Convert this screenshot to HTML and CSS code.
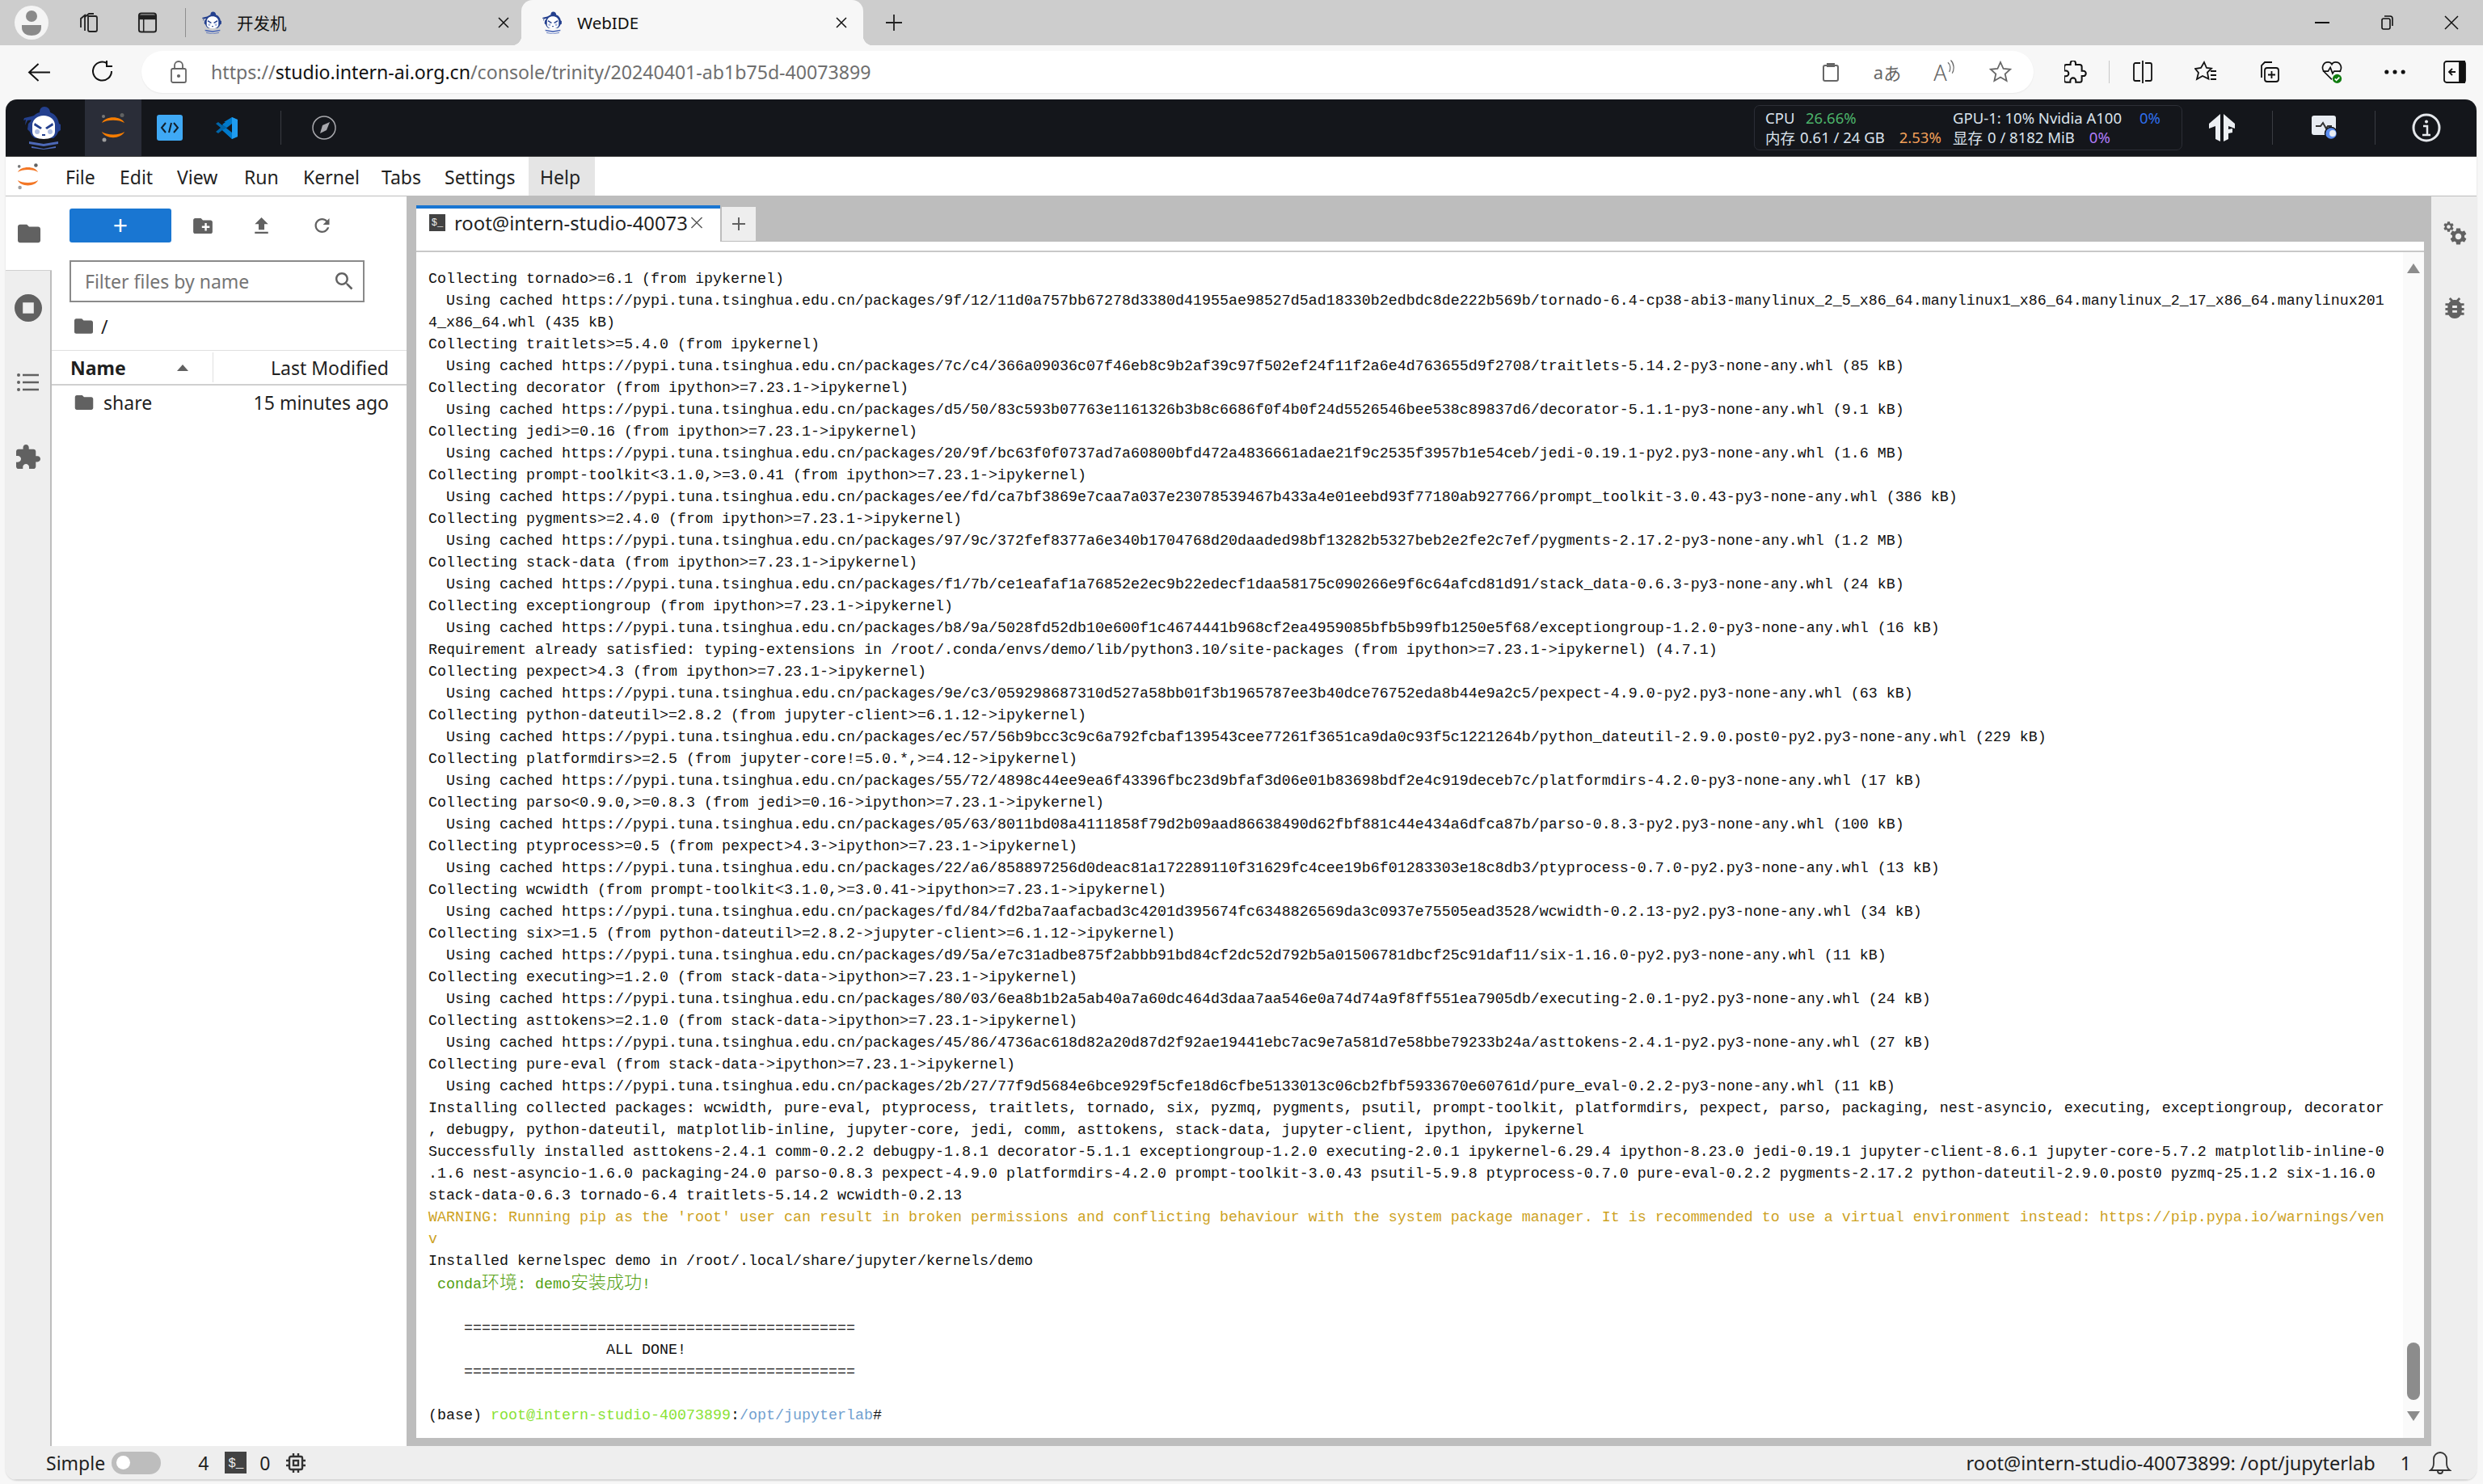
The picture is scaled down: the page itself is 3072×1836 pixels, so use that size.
FILE: index.html
```html
<!DOCTYPE html>
<html lang="en">
<head>
<meta charset="utf-8">
<title>WebIDE</title>
<link rel="stylesheet" href="styles.css">
</head>
<body>
<svg class="defs" width="0" height="0" aria-hidden="true">
  <defs>
    <symbol id="mascot" viewBox="0 0 50 54">
      <path fill="#24408e" d="M20 8c0-4 2-7 6-7s7 3 7 7c6 2 10 7 11 14l2 1v7l-3 2c-1 3-3 6-6 8H14c-3-2-5-5-6-8l-3-3 1-7 3-3C10 14 14 10 20 8z"/>
      <path fill="#24408e" d="M1 15l13-3-2 5-7 1-3 6 1-7-3 1z"/>
      <path fill="#fff" d="M11 24c0-7 6-12 14-12s14 5 14 12v8c0 6-6 9-14 9s-14-3-14-9z"/>
      <path fill="#24408e" d="M14 21l9 6-2 2-8-5zM36 21l-9 6 2 2 8-5z"/>
      <circle cx="17" cy="32" r="3" fill="#aebde2"/><circle cx="33" cy="32" r="3" fill="#aebde2"/>
      <path fill="#24408e" d="M23 35h4v2h-4z"/>
      <path fill="#4d69b8" d="M7 44l18 3 18-3v3l-18 3-18-3zM10 50l15 3 15-3v2l-15 2-15-2z"/>
    </symbol>
    <symbol id="jupyter" viewBox="0 0 30 36">
      <path fill="currentColor" d="M1 12C5 3 25 3 29 12 23 7.500 7 7.500 1 12zM1 23c4 9.500 24 9.500 28 0-6 4.500-22 4.500-28 0z"/>
      <circle cx="3" cy="4" r="2" fill="#767677"/><circle cx="26" cy="2.500" r="2.500" fill="#616262"/><circle cx="4" cy="33" r="2.500" fill="#9e9e9e"/>
    </symbol>
    <symbol id="folder" viewBox="2 4 20 16"><path d="M10 4H4c-1.100 0-1.990.9-1.990 2L2 18c0 1.100.9 2 2 2h16c1.100 0 2-.9 2-2V8c0-1.100-.9-2-2-2h-8l-2-2z"/></symbol>
    <symbol id="gear" viewBox="2 2 20 20"><path d="M19.140 12.940c.04-.3.06-.61.06-.94 0-.32-.02-.64-.07-.94l2.030-1.580c.18-.14.23-.41.12-.61l-1.920-3.320c-.12-.22-.37-.29-.59-.22l-2.390.96c-.5-.38-1.030-.7-1.620-.94l-.36-2.540c-.04-.24-.24-.41-.48-.41h-3.840c-.24 0-.43.17-.47.41l-.36 2.540c-.59.24-1.130.57-1.620.94l-2.390-.96c-.22-.08-.47 0-.59.22L2.740 8.870c-.12.21-.08.47.12.61l2.030 1.580c-.05.3-.09.63-.09.94s.02.64.07.94l-2.030 1.580c-.18.14-.23.41-.12.61l1.920 3.320c.12.22.37.29.59.22l2.390-.96c.5.38 1.030.7 1.620.94l.36 2.540c.05.24.24.41.48.41h3.840c.24 0 .44-.17.47-.41l.36-2.540c.59-.24 1.130-.56 1.620-.94l2.390.96c.22.08.47 0 .59-.22l1.920-3.320c.12-.22.07-.47-.12-.61l-2.010-1.580zM12 15.600c-1.980 0-3.600-1.620-3.600-3.600s1.620-3.600 3.600-3.600 3.600 1.620 3.600 3.600-1.620 3.600-3.600 3.600z"/></symbol>
  </defs>
</svg>

<div class="browser">
  <header class="tabstrip">
    <div class="avatar"><svg viewBox="0 0 42 42" class="avatar-icon"><circle cx="21" cy="13" r="7" fill="#8a8a8a"/><path d="M9 24h24v3c0 7-6 10-12 10S9 34 9 27z" fill="#8a8a8a"/></svg></div>
    <svg class="strip-icon collections" viewBox="0 0 28 28" fill="none" stroke="#222" stroke-width="1.800"><path d="M14 6h9a2 2 0 0 1 2 2v15a2 2 0 0 1-2 2h-7a2 2 0 0 1-2-2z"/><path d="M10 24V7l5-4h6M5 20V9l6-5"/></svg>
    <svg class="strip-icon verticals" viewBox="0 0 26 28" fill="none" stroke="#222" stroke-width="2"><rect x="2" y="2" width="22" height="24" rx="3"/><path d="M2 7h22" stroke-width="6"/><path d="M8 7v19" stroke-width="1.600"/></svg>
    <span class="strip-sep"></span>
    <div class="btab">
      <svg class="favicon"><use href="#mascot"/></svg>
      <span class="btab-title cjk">开发机</span>
      <svg class="btab-close" viewBox="0 0 16 16" fill="none" stroke="#111" stroke-width="1.500"><path d="M2 2l12 12M14 2L2 14"/></svg>
    </div>
    <div class="btab btab-active">
      <svg class="favicon"><use href="#mascot"/></svg>
      <span class="btab-title">WebIDE</span>
      <svg class="btab-close" viewBox="0 0 16 16" fill="none" stroke="#111" stroke-width="1.500"><path d="M2 2l12 12M14 2L2 14"/></svg>
    </div>
    <svg class="newtab" viewBox="0 0 22 22" fill="none" stroke="#222" stroke-width="1.800"><path d="M11 1v20M1 11h20"/></svg>
    <div class="winctl">
      <svg viewBox="0 0 18 18" fill="none" stroke="#111" stroke-width="2"><path d="M0 9h18"/></svg>
      <svg viewBox="0 0 18 18" fill="none" stroke="#111" stroke-width="1.600"><rect x="3" y="4" width="10" height="13" rx="2"/><path d="M6 1h7a3 3 0 0 1 3 3v9"/></svg>
      <svg viewBox="0 0 18 18" fill="none" stroke="#111" stroke-width="1.500"><path d="M1 1l16 16M17 1L1 17"/></svg>
    </div>
  </header>

  <nav class="toolbar">
    <svg class="nav-icon back" viewBox="0 0 30 26" fill="none" stroke="#111" stroke-width="2"><path d="M14 2L2 13l12 11M2 13h27"/></svg>
    <svg class="nav-icon reload" viewBox="0 0 28 28" fill="none" stroke="#111" stroke-width="2"><path d="M20 4a11.500 11.500 0 1 0 6 10"/><path d="M20 1v7h7"/></svg>
    <div class="pill">
      <svg class="lock" viewBox="0 0 22 30" fill="none" stroke="#666" stroke-width="1.800"><rect x="2" y="11" width="18" height="17" rx="2"/><path d="M6 11V7a5 5 0 0 1 10 0v4"/><circle cx="11" cy="20" r="1.200" fill="#666"/></svg>
      <div class="url"><span class="url-dim">https://</span><span>studio.intern-ai.org.cn</span><span class="url-dim">/console/trinity/20240401-ab1b75d-40073899</span></div>
      <div class="pill-tools">
        <span class="pill-slot"><svg class="pt-clip" viewBox="0 0 22 24" fill="none" stroke="#666" stroke-width="2"><rect x="2" y="4" width="18" height="19" rx="2"/><path d="M7 5V2h8v3z" fill="#666"/></svg></span>
        <span class="pill-slot translate">a<span class="cjk">あ</span></span>
        <span class="pill-slot readaloud">A<svg viewBox="0 0 10 20" fill="none" stroke="#666" stroke-width="1.300"><path d="M1 3c4 3 4 9 2 13M5 0c5 5 5 13 2 18"/></svg></span>
        <span class="pill-slot"><svg class="pt-star" viewBox="0 0 28 28" fill="none" stroke="#666" stroke-width="1.800"><path d="M14 2l3.600 8 8.400.8-6.300 5.700 1.900 8.500L14 20.500 6.400 25l1.900-8.500L2 10.800l8.400-.8z"/></svg></span>
      </div>
    </div>
    <div class="tools">
      <span class="tool"><svg viewBox="2 1 22 22" fill="none" stroke="#111" stroke-width="1.600"><path d="M20.500 11H19V7c0-1.100-.9-2-2-2h-4V3.500C13 2.120 11.880 1 10.500 1S8 2.120 8 3.500V5H4c-1.100 0-1.990.9-1.990 2v3.800H3.500c1.490 0 2.700 1.210 2.700 2.700s-1.210 2.700-2.700 2.700H2V20c0 1.100.9 2 2 2h3.800v-1.500c0-1.490 1.210-2.700 2.700-2.700 1.490 0 2.700 1.210 2.700 2.700V22H17c1.100 0 2-.9 2-2v-4h1.500c1.380 0 2.500-1.120 2.500-2.500S21.880 11 20.500 11z"/></svg></span>
      <span class="tool-sep"></span>
      <span class="tool"><svg viewBox="0 0 26 28" fill="none" stroke="#111" stroke-width="1.800"><path d="M13 0v28M10 3H4a2 2 0 0 0-2 2v18a2 2 0 0 0 2 2h6M16 3h6a2 2 0 0 1 2 2v18a2 2 0 0 1-2 2h-6"/></svg></span>
      <span class="tool"><svg viewBox="0 0 28 28" fill="none" stroke="#111" stroke-width="1.800"><path d="M12 2l3 7 6 .6-5 5 1.500 8L10 19l-7 4 2-8-4-5 7-1zM20 13h7M20 18h7M20 23h7"/></svg></span>
      <span class="tool"><svg viewBox="0 0 28 28" fill="none" stroke="#111" stroke-width="1.800"><path d="M5 21V6l4-4h9"/><rect x="9" y="9" width="17" height="17" rx="3"/><path d="M17.500 13v9M13 17.500h9"/></svg></span>
      <span class="tool"><svg viewBox="0 0 28 30" fill="none" stroke="#111" stroke-width="1.800"><path d="M14 25L4 15C-1 9 3 2 9 2c2 0 4 1 5 3 1-2 3-3 5-3 6 0 10 7 5 13"/><path d="M2 14h7l3-5 3 8 2-3h9"/><circle cx="21" cy="24" r="6" fill="#107c10" stroke="none"/><path d="M18 24l2 2 4-4" stroke="#fff"/></svg></span>
      <span class="tool"><svg viewBox="0 0 22 6" fill="#111"><circle cx="3" cy="3" r="2"/><circle cx="11" cy="3" r="2"/><circle cx="19" cy="3" r="2"/></svg></span>
      <span class="tool tool-last"><svg viewBox="0 0 28 28" fill="none" stroke="#111" stroke-width="1.800"><rect x="1" y="1" width="26" height="26" rx="3"/><path d="M20 1h6v26h-6z" fill="#111"/><path d="M15 14H7M11 10l-4 4 4 4"/></svg></span>
    </div>
  </nav>
</div>

<main class="app">
  <div class="topbar">
    <svg class="mascot"><use href="#mascot"/></svg>
    <div class="topitem topitem-active"><svg class="jup-top"><use href="#jupyter"/></svg></div>
    <div class="topitem"><svg class="code-app" viewBox="0 0 32 32"><rect width="32" height="32" rx="3" fill="#3fa9f5"/><path d="M11 10l-5 6 5 6M21 10l5 6-5 6M18 10l-3 12" fill="none" stroke="#12202c" stroke-width="2"/></svg></div>
    <div class="topitem"><svg class="vscode" viewBox="0 0 27 27"><path fill="#0065a9" d="M20 0l7 3v21l-7 3-12-11-5 4-3-2 6-5-6-5 3-2 5 4z"/><path fill="#007acc" d="M20 0v27l-12-11 6-3-6-4 4-3-2 0z"/><path fill="#1f9cf0" d="M20 0l7 3v21l-7 3z"/><path fill="#14161b" d="M20 8v11l-7-5.500z"/></svg></div>
    <span class="top-sep"></span>
    <svg class="compass" viewBox="0 0 30 30"><circle cx="15" cy="15" r="14" fill="none" stroke="#a8a8ad" stroke-width="1.500"/><path d="M22 8l-4 10-8 4 3-10z" fill="#a8a8ad"/></svg>
    <div class="top-spacer"></div>
    <div class="stats">
      <div class="stats-col stats-left">
        <div class="stat-row"><span class="stat-label">CPU</span><span class="c-green">26.66%</span></div>
        <div class="stat-row"><span class="cjk-stat">内存</span><span class="mem">0.61 / 24 GB</span><span class="c-orange">2.53%</span></div>
      </div>
      <div class="stats-col">
        <div class="stat-row"><span class="gpu">GPU-1: 10% Nvidia A100</span><span class="c-blue">0%</span></div>
        <div class="stat-row"><span class="cjk-stat">显存</span><span class="mem">0 / 8182 MiB</span><span class="c-purple">0%</span></div>
      </div>
    </div>
    <div class="top-right">
      <svg class="tf" viewBox="0 0 32 34" fill="#eceff3"><path d="M14 0v34l-6-3V15L0 18v-6zM18 0l14 12v6l-8-3v4l5-1v5l-5 1v7l-6 3z"/></svg>
      <span class="top-sep"></span>
      <svg class="monitor" viewBox="0 0 32 30"><rect width="30" height="24" rx="3" fill="#e8ecf2"/><path d="M5 13h6l3-4 4 7 2-3h5" fill="none" stroke="#333" stroke-width="2"/><circle cx="24" cy="22" r="7.500" fill="#5b8def" stroke="#14161b" stroke-width="1.500"/><circle cx="26" cy="22" r="4" fill="#e8ecf2"/></svg>
      <span class="top-sep"></span>
      <svg class="info" viewBox="0 0 36 36" fill="none" stroke="#e4e7eb" stroke-width="3"><circle cx="18" cy="18" r="16"/><circle cx="18" cy="10.500" r="2" fill="#e4e7eb" stroke="none"/><path d="M14 16h5v10M13 27h10" stroke-width="2.500"/></svg>
    </div>
  </div>

  <div class="menubar">
    <svg class="jup-menu"><use href="#jupyter"/></svg>
    <span class="menu m-file">File</span>
    <span class="menu m-edit">Edit</span>
    <span class="menu m-view">View</span>
    <span class="menu m-run">Run</span>
    <span class="menu m-kernel">Kernel</span>
    <span class="menu m-tabs">Tabs</span>
    <span class="menu m-settings">Settings</span>
    <span class="menu m-help">Help</span>
  </div>

  <div class="workspace">
    <aside class="rail">
      <div class="rail-item rail-active"><svg class="ri-folder"><use href="#folder"/></svg></div>
      <div class="rail-item"><svg class="ri-stop" viewBox="2 2 20 20"><path d="M12 2C6.480 2 2 6.480 2 12s4.480 10 10 10 10-4.480 10-10S17.520 2 12 2zm4 14H8V8h8v8z"/></svg></div>
      <div class="rail-item"><svg class="ri-list" viewBox="0 0 27 22"><circle cx="2" cy="2" r="2"/><circle cx="2" cy="11" r="2"/><circle cx="2" cy="20" r="2"/><path d="M7 .8h20v2.400H7zM7 9.800h20v2.400H7zM7 18.800h20v2.400H7z"/></svg></div>
      <div class="rail-item"><svg class="ri-ext" viewBox="2 1 21 21"><path d="M20.500 11H19V7c0-1.100-.9-2-2-2h-4V3.500C13 2.120 11.880 1 10.500 1S8 2.120 8 3.500V5H4c-1.100 0-1.990.9-1.990 2v3.800H3.500c1.490 0 2.700 1.210 2.700 2.700s-1.210 2.700-2.700 2.700H2V20c0 1.100.9 2 2 2h3.800v-1.500c0-1.490 1.210-2.700 2.700-2.700 1.490 0 2.700 1.210 2.700 2.700V22H17c1.100 0 2-.9 2-2v-4h1.500c1.380 0 2.500-1.120 2.500-2.500S21.880 11 20.500 11z"/></svg></div>
    </aside>

    <section class="files">
      <div class="file-tools">
        <button class="new-btn" type="button">+</button>
        <svg class="ft ft-newfolder" viewBox="2 4 20 16"><path d="M20 6h-8l-2-2H4c-1.110 0-1.990.89-1.990 2L2 18c0 1.110.89 2 2 2h16c1.110 0 2-.89 2-2V8c0-1.110-.89-2-2-2zm-1 8h-3v3h-2v-3h-3v-2h3V9h2v3h3v2z"/></svg>
        <svg class="ft ft-upload" viewBox="5 3 14 17"><path d="M9 16h6v-6h4l-7-7-7 7h4v6zm-4 2h14v2H5z"/></svg>
        <svg class="ft ft-refresh" viewBox="4 4 16 16"><path d="M17.650 6.350C16.200 4.900 14.210 4 12 4c-4.420 0-7.990 3.580-7.990 8s3.570 8 7.990 8c3.730 0 6.840-2.550 7.730-6h-2.080c-.82 2.330-3.040 4-5.650 4-3.310 0-6-2.690-6-6s2.690-6 6-6c1.660 0 3.140.69 4.220 1.780L13 11h7V4l-2.350 2.350z"/></svg>
      </div>
      <div class="filter">
        <span class="filter-text">Filter files by name</span>
        <svg class="filter-icon" viewBox="3 3 18 18"><path d="M15.500 14h-.79l-.28-.27C15.410 12.590 16 11.110 16 9.500 16 5.910 13.090 3 9.500 3S3 5.910 3 9.500 5.910 16 9.500 16c1.610 0 3.090-.59 4.230-1.570l.27.28v.79l5 4.990L20.490 19l-4.990-5zm-6 0C7.010 14 5 11.990 5 9.500S7.010 5 9.500 5 14 7.010 14 9.500 11.990 14 9.500 14z"/></svg>
      </div>
      <div class="crumb"><svg class="crumb-folder"><use href="#folder"/></svg><span>/</span></div>
      <div class="file-head">
        <div class="col-name"><span class="head-name">Name</span><span class="caret"></span></div>
        <div class="col-mod">Last Modified</div>
      </div>
      <div class="file-row">
        <svg class="row-folder"><use href="#folder"/></svg>
        <span class="row-name">share</span>
        <span class="row-mod">15 minutes ago</span>
      </div>
    </section>

    <section class="main">
      <div class="doc-tabs">
        <div class="doc-tab">
          <span class="term-badge">$_</span>
          <span class="doc-title">root@intern-studio-40073</span>
          <svg class="doc-close" viewBox="0 0 16 16" fill="none" stroke="#555" stroke-width="1.500"><path d="M1 1l14 14M15 1L1 15"/></svg>
        </div>
        <div class="doc-add">
          <svg viewBox="0 0 16 16" fill="none" stroke="#616161" stroke-width="2"><path d="M8 0v16M0 8h16"/></svg>
        </div>
      </div>
      <div class="panel">
        <div class="panel-strip"></div>
        <div class="terminal">
<pre class="term-text">Collecting tornado&gt;=6.1 (from ipykernel)
  Using cached https://pypi.tuna.tsinghua.edu.cn/packages/9f/12/11d0a757bb67278d3380d41955ae98527d5ad18330b2edbdc8de222b569b/tornado-6.4-cp38-abi3-manylinux_2_5_x86_64.manylinux1_x86_64.manylinux_2_17_x86_64.manylinux201
4_x86_64.whl (435 kB)
Collecting traitlets&gt;=5.4.0 (from ipykernel)
  Using cached https://pypi.tuna.tsinghua.edu.cn/packages/7c/c4/366a09036c07f46eb8c9b2af39c97f502ef24f11f2a6e4d763655d9f2708/traitlets-5.14.2-py3-none-any.whl (85 kB)
Collecting decorator (from ipython&gt;=7.23.1-&gt;ipykernel)
  Using cached https://pypi.tuna.tsinghua.edu.cn/packages/d5/50/83c593b07763e1161326b3b8c6686f0f4b0f24d5526546bee538c89837d6/decorator-5.1.1-py3-none-any.whl (9.1 kB)
Collecting jedi&gt;=0.16 (from ipython&gt;=7.23.1-&gt;ipykernel)
  Using cached https://pypi.tuna.tsinghua.edu.cn/packages/20/9f/bc63f0f0737ad7a60800bfd472a4836661adae21f9c2535f3957b1e54ceb/jedi-0.19.1-py2.py3-none-any.whl (1.6 MB)
Collecting prompt-toolkit&lt;3.1.0,&gt;=3.0.41 (from ipython&gt;=7.23.1-&gt;ipykernel)
  Using cached https://pypi.tuna.tsinghua.edu.cn/packages/ee/fd/ca7bf3869e7caa7a037e23078539467b433a4e01eebd93f77180ab927766/prompt_toolkit-3.0.43-py3-none-any.whl (386 kB)
Collecting pygments&gt;=2.4.0 (from ipython&gt;=7.23.1-&gt;ipykernel)
  Using cached https://pypi.tuna.tsinghua.edu.cn/packages/97/9c/372fef8377a6e340b1704768d20daaded98bf13282b5327beb2e2fe2c7ef/pygments-2.17.2-py3-none-any.whl (1.2 MB)
Collecting stack-data (from ipython&gt;=7.23.1-&gt;ipykernel)
  Using cached https://pypi.tuna.tsinghua.edu.cn/packages/f1/7b/ce1eafaf1a76852e2ec9b22edecf1daa58175c090266e9f6c64afcd81d91/stack_data-0.6.3-py3-none-any.whl (24 kB)
Collecting exceptiongroup (from ipython&gt;=7.23.1-&gt;ipykernel)
  Using cached https://pypi.tuna.tsinghua.edu.cn/packages/b8/9a/5028fd52db10e600f1c4674441b968cf2ea4959085bfb5b99fb1250e5f68/exceptiongroup-1.2.0-py3-none-any.whl (16 kB)
Requirement already satisfied: typing-extensions in /root/.conda/envs/demo/lib/python3.10/site-packages (from ipython&gt;=7.23.1-&gt;ipykernel) (4.7.1)
Collecting pexpect&gt;4.3 (from ipython&gt;=7.23.1-&gt;ipykernel)
  Using cached https://pypi.tuna.tsinghua.edu.cn/packages/9e/c3/059298687310d527a58bb01f3b1965787ee3b40dce76752eda8b44e9a2c5/pexpect-4.9.0-py2.py3-none-any.whl (63 kB)
Collecting python-dateutil&gt;=2.8.2 (from jupyter-client&gt;=6.1.12-&gt;ipykernel)
  Using cached https://pypi.tuna.tsinghua.edu.cn/packages/ec/57/56b9bcc3c9c6a792fcbaf139543cee77261f3651ca9da0c93f5c1221264b/python_dateutil-2.9.0.post0-py2.py3-none-any.whl (229 kB)
Collecting platformdirs&gt;=2.5 (from jupyter-core!=5.0.*,&gt;=4.12-&gt;ipykernel)
  Using cached https://pypi.tuna.tsinghua.edu.cn/packages/55/72/4898c44ee9ea6f43396fbc23d9bfaf3d06e01b83698bdf2e4c919deceb7c/platformdirs-4.2.0-py3-none-any.whl (17 kB)
Collecting parso&lt;0.9.0,&gt;=0.8.3 (from jedi&gt;=0.16-&gt;ipython&gt;=7.23.1-&gt;ipykernel)
  Using cached https://pypi.tuna.tsinghua.edu.cn/packages/05/63/8011bd08a4111858f79d2b09aad86638490d62fbf881c44e434a6dfca87b/parso-0.8.3-py2.py3-none-any.whl (100 kB)
Collecting ptyprocess&gt;=0.5 (from pexpect&gt;4.3-&gt;ipython&gt;=7.23.1-&gt;ipykernel)
  Using cached https://pypi.tuna.tsinghua.edu.cn/packages/22/a6/858897256d0deac81a172289110f31629fc4cee19b6f01283303e18c8db3/ptyprocess-0.7.0-py2.py3-none-any.whl (13 kB)
Collecting wcwidth (from prompt-toolkit&lt;3.1.0,&gt;=3.0.41-&gt;ipython&gt;=7.23.1-&gt;ipykernel)
  Using cached https://pypi.tuna.tsinghua.edu.cn/packages/fd/84/fd2ba7aafacbad3c4201d395674fc6348826569da3c0937e75505ead3528/wcwidth-0.2.13-py2.py3-none-any.whl (34 kB)
Collecting six&gt;=1.5 (from python-dateutil&gt;=2.8.2-&gt;jupyter-client&gt;=6.1.12-&gt;ipykernel)
  Using cached https://pypi.tuna.tsinghua.edu.cn/packages/d9/5a/e7c31adbe875f2abbb91bd84cf2dc52d792b5a01506781dbcf25c91daf11/six-1.16.0-py2.py3-none-any.whl (11 kB)
Collecting executing&gt;=1.2.0 (from stack-data-&gt;ipython&gt;=7.23.1-&gt;ipykernel)
  Using cached https://pypi.tuna.tsinghua.edu.cn/packages/80/03/6ea8b1b2a5ab40a7a60dc464d3daa7aa546e0a74d74a9f8ff551ea7905db/executing-2.0.1-py2.py3-none-any.whl (24 kB)
Collecting asttokens&gt;=2.1.0 (from stack-data-&gt;ipython&gt;=7.23.1-&gt;ipykernel)
  Using cached https://pypi.tuna.tsinghua.edu.cn/packages/45/86/4736ac618d82a20d87d2f92ae19441ebc7ac9e7a581d7e58bbe79233b24a/asttokens-2.4.1-py2.py3-none-any.whl (27 kB)
Collecting pure-eval (from stack-data-&gt;ipython&gt;=7.23.1-&gt;ipykernel)
  Using cached https://pypi.tuna.tsinghua.edu.cn/packages/2b/27/77f9d5684e6bce929f5cfe18d6cfbe5133013c06cb2fbf5933670e60761d/pure_eval-0.2.2-py3-none-any.whl (11 kB)
Installing collected packages: wcwidth, pure-eval, ptyprocess, traitlets, tornado, six, pyzmq, pygments, psutil, prompt-toolkit, platformdirs, pexpect, parso, packaging, nest-asyncio, executing, exceptiongroup, decorator
, debugpy, python-dateutil, matplotlib-inline, jupyter-core, jedi, comm, asttokens, stack-data, jupyter-client, ipython, ipykernel
Successfully installed asttokens-2.4.1 comm-0.2.2 debugpy-1.8.1 decorator-5.1.1 exceptiongroup-1.2.0 executing-2.0.1 ipykernel-6.29.4 ipython-8.23.0 jedi-0.19.1 jupyter-client-8.6.1 jupyter-core-5.7.2 matplotlib-inline-0
.1.6 nest-asyncio-1.6.0 packaging-24.0 parso-0.8.3 pexpect-4.9.0 platformdirs-4.2.0 prompt-toolkit-3.0.43 psutil-5.9.8 ptyprocess-0.7.0 pure-eval-0.2.2 pygments-2.17.2 python-dateutil-2.9.0.post0 pyzmq-25.1.2 six-1.16.0
stack-data-0.6.3 tornado-6.4 traitlets-5.14.2 wcwidth-0.2.13
<span class="t-warn">WARNING: Running pip as the 'root' user can result in broken permissions and conflicting behaviour with the system package manager. It is recommended to use a virtual environment instead: https://pip.pypa.io/warnings/ven
v</span>
Installed kernelspec demo in /root/.local/share/jupyter/kernels/demo
<span class="t-ok"> conda<span class="t-cjk">环境</span>: demo<span class="t-cjk">安装成功</span>!</span>

    ============================================
                    ALL DONE!
    ============================================

(base) <span class="t-prompt">root@intern-studio-40073899</span>:<span class="t-path">/opt/jupyterlab</span># </pre>
          <div class="scrollbar">
            <span class="arrow-up"></span>
            <div class="scroll-end">
              <span class="thumb"></span>
              <span class="arrow-down"></span>
            </div>
          </div>
        </div>
      </div>
    </section>

    <aside class="rail-right">
      <svg class="gears" viewBox="0 0 29 29"><use href="#gear" x="0" y="0" width="13" height="13"/><use href="#gear" x="8" y="8" width="21" height="21"/></svg>
      <svg class="bug" viewBox="4 3 16 18"><path d="M20 8h-2.810c-.45-.78-1.070-1.450-1.820-1.960L17 4.410 15.590 3l-2.170 2.170C12.960 5.060 12.490 5 12 5c-.49 0-.96.06-1.410.17L8.410 3 7 4.410l1.620 1.630C7.880 6.550 7.260 7.220 6.810 8H4v2h2.090c-.05.33-.09.66-.09 1v1H4v2h2v1c0 .34.04.67.09 1H4v2h2.810c1.040 1.790 2.970 3 5.190 3s4.150-1.210 5.190-3H20v-2h-2.090c.05-.33.09-.66.09-1v-1h2v-2h-2v-1c0-.34-.04-.67-.09-1H20V8zm-6 8h-4v-2h4v2zm0-4h-4v-2h4v2z"/></svg>
    </aside>
  </div>

  <footer class="status">
    <span class="st-simple">Simple</span>
    <span class="toggle"><span class="knob"></span></span>
    <span class="st-num st-four">4</span>
    <span class="term-badge st-badge">$_</span>
    <span class="st-num st-zero">0</span>
    <svg class="chip" viewBox="0 0 24 24" fill="none" stroke="#333" stroke-width="2.400"><rect x="4" y="4" width="16" height="16" rx="2"/><rect x="9" y="9" width="6" height="6"/><path d="M9 0v3M15 0v3M9 21v3M15 21v3M0 9h3M0 15h3M21 9h3M21 15h3"/></svg>
    <span class="st-spacer"></span>
    <span class="st-path">root@intern-studio-40073899: /opt/jupyterlab</span>
    <span class="st-num st-one">1</span>
    <svg class="bell" viewBox="0 0 28 28" fill="none" stroke="#333" stroke-width="1.800"><path d="M2 23c3-2 4-5 4-9V9a8 8 0 0 1 16 0v5c0 4 1 7 4 9z"/><path d="M11 24a3 3 0 0 0 6 0"/></svg>
  </footer>
</main>
</body>
</html>
```
FILE: styles.css
```css
* { box-sizing: border-box; }
html, body { margin: 0; height: 100%; }
body {
  width: 3072px;
  height: 1836px;
  overflow: hidden;
  background: #f7f7f7;
  font-family: "Noto Sans", "Noto Sans CJK SC", sans-serif;
  color: #1f1f1f;
  display: flex;
  flex-direction: column;
}
svg { display: block; flex: none; }
.defs { position: absolute; }
.cjk { font-family: "Noto Sans CJK SC", sans-serif; }

/* browser chrome */
.tabstrip {
  height: 56px;
  background: #cdcdcd;
  display: flex;
  align-items: center;
  padding-left: 18px;
  position: relative;
}
.avatar { width: 42px; height: 42px; border-radius: 50%; background: #f4f4f4; margin-right: 35px; }
.avatar-icon { width: 42px; height: 42px; }
.strip-icon { height: 28px; }
.collections { width: 28px; margin-right: 47px; }
.verticals { width: 25px; margin-right: 34px; }
.strip-sep { width: 1px; height: 36px; background: #8f8f8f; margin-right: 10px; }
.btab { width: 406px; height: 56px; display: flex; align-items: center; padding-left: 10px; font-size: 20.500px; color: #111; position: relative; flex: none; }
.favicon { width: 26px; height: 28px; margin-right: 17px; }
.btab-title { flex: 1; }
.btab-close { width: 16px; height: 16px; margin-right: 15px; }
.btab-active { width: 423px; background: #f7f7f7; border-radius: 14px 14px 0 0; padding-left: 26px; margin-left: -1px; }
.btab-active .btab-close { margin-right: 19px; }
.btab-active::before, .btab-active::after {
  content: "";
  position: absolute;
  bottom: 0;
  width: 12px;
  height: 12px;
}
.btab-active::before { left: -12px; background: radial-gradient(circle at 0 0, transparent 12px, #f7f7f7 12.500px); }
.btab-active::after { right: -12px; background: radial-gradient(circle at 100% 0, transparent 12px, #f7f7f7 12.500px); }
.newtab { width: 22px; height: 22px; margin-left: 27px; }
.winctl { margin-left: auto; display: flex; align-items: center; gap: 62px; padding-right: 30px; }
.winctl svg { width: 18px; height: 18px; }

.toolbar { height: 67px; background: #f7f7f7; display: flex; align-items: flex-start; padding-top: 7px; padding-left: 34px; }
.nav-icon { margin-top: 14px; }
.back { width: 29px; height: 25px; margin-right: 49px; }
.reload { width: 28px; height: 28px; margin-right: 35px; margin-top: 11px; }
.pill { width: 2341px; height: 52px; background: #fff; border-radius: 26px; display: flex; align-items: center; padding-left: 35px; box-shadow: 0 1px 2px rgba(0,0,0,.06); flex: none; }
.lock { width: 22px; height: 30px; margin-right: 29px; }
.url { flex: 1; font-size: 23.130px; color: #111; white-space: nowrap; }
.url-dim { color: #6f6f6f; }
.pill-tools { display: flex; align-items: center; padding-right: 6px; }
.pill-slot { width: 70px; display: flex; align-items: center; justify-content: center; color: #666; }
.pt-clip { width: 22px; height: 24px; }
.pt-star { width: 28px; height: 28px; }
.translate { font-size: 22px; }
.readaloud { font-size: 27px; font-weight: 300; }
.readaloud svg { width: 9px; height: 19px; margin-top: -12px; }
.tools { display: flex; align-items: center; height: 52px; margin-left: 13px; }
.tool { width: 78px; display: flex; align-items: center; justify-content: center; }
.tool svg { width: 28px; height: 28px; }
.tool-sep { width: 1px; height: 28px; background: #c8c8c8; margin: 0 2px; }
.tool-last { width: 70px; }

/* app shell */
.app {
  margin: 0 8px 5px 7px;
  height: 1708px;
  display: flex;
  flex-direction: column;
  border-radius: 14px;
  overflow: hidden;
  box-shadow: 0 1px 2px rgba(0,0,0,.15);
}
.topbar { height: 71px; background: #14161b; display: flex; align-items: center; border-bottom: 1px solid #3a3a3a; flex: none; }
.mascot { width: 50px; height: 54px; margin: 0 26px 0 22px; }
.topitem { width: 70px; height: 70px; display: flex; align-items: center; justify-content: center; flex: none; }
.topitem-active { background: #2a2d38; }
.jup-top { width: 30px; height: 36px; color: #f57c00; }
.code-app { width: 32px; height: 32px; }
.vscode { width: 27px; height: 27px; }
.top-sep { width: 1px; height: 42px; background: #3a3c42; flex: none; }
.topbar > .top-sep { margin-left: 32px; margin-right: 38px; }
.compass { width: 30px; height: 30px; }
.top-spacer { flex: 1; }
.stats {
  width: 530px;
  height: 56px;
  border: 1px solid #2c2e36;
  border-radius: 7px;
  display: flex;
  padding: 3px 0 0 13px;
  font-size: 18.500px;
  line-height: 24px;
  color: #dbe3ec;
  white-space: nowrap;
}
.stats-col { display: flex; flex-direction: column; }
.stats-left { width: 232px; }
.stat-row { display: flex; height: 24px; }
.stat-label { width: 50px; }
.cjk-stat { font-family: "Noto Sans CJK SC", sans-serif; margin-right: 6px; }
.mem { margin-right: 18px; }
.gpu { width: 231px; }
.c-green { color: #4cb36a; }
.c-orange { color: #f2a05a; }
.c-blue { color: #2f6fed; }
.c-purple { color: #b07cf8; }
.top-right { display: flex; align-items: center; padding-right: 44px; }
.tf { width: 32px; height: 34px; margin: 0 46px 0 33px; }
.monitor { width: 32px; height: 30px; margin: 0 46px 0 48px; }
.info { width: 36px; height: 36px; margin-left: 45px; }

.menubar {
  height: 49px;
  background: #fff;
  border-bottom: 1px solid #bdbdbd;
  display: flex;
  align-items: stretch;
  font-size: 23px;
  flex: none;
  position: relative;
}
.jup-menu { width: 27px; height: 35px; color: #f37726; margin: 7px 0 0 14px; }
.menu { display: flex; align-items: center; flex: none; padding-top: 2px; }
.m-file { margin-left: 33px; width: 67px; }
.m-edit { width: 71px; }
.m-view { width: 83px; }
.m-run { width: 73px; }
.m-kernel { width: 97px; }
.m-tabs { width: 78px; }
.m-settings { width: 104px; }
.m-help { width: 82px; background: #e5e5e5; padding-left: 14px; }

.workspace { flex: 1; display: flex; min-height: 0; background: #eee; }
.rail { width: 57px; border-right: 2px solid #bdbdbd; background: #eee; flex: none; display: flex; flex-direction: column; fill: #616161; }
.rail-item { height: 92px; display: flex; align-items: center; justify-content: center; flex: none; }
.rail-active { background: #fff; margin-right: -2px; border-bottom: 1px solid #d0d0d0; }
.ri-folder { width: 28px; height: 24px; }
.ri-stop { width: 34px; height: 34px; }
.ri-list { width: 27px; height: 22px; }
.ri-ext { width: 30px; height: 30px; }

.files { width: 439px; background: #fff; flex: none; display: flex; flex-direction: column; fill: #616161; }
.file-tools { display: flex; align-items: center; height: 42px; margin: 15px 0 22px 22px; }
.new-btn { width: 126px; height: 42px; border: 0; border-radius: 3px; background: #1976d2; color: #fff; font-size: 32px; line-height: 40px; padding: 0; font-family: "Noto Sans", sans-serif; }
.ft { fill: #616161; }
.ft-newfolder { width: 24px; height: 19px; margin-left: 27px; }
.ft-upload { width: 17px; height: 20px; margin-left: 52px; }
.ft-refresh { width: 19px; height: 18px; margin-left: 57px; }
.filter { width: 365px; height: 52px; border: 2px solid #8a8a8a; margin-left: 22px; display: flex; align-items: center; justify-content: space-between; padding: 0 12px 0 17px; flex: none; }
.filter-text { font-size: 23px; color: #757575; }
.filter-icon { width: 22px; height: 22px; fill: #616161; }
.crumb { height: 59px; display: flex; align-items: center; padding-left: 28px; gap: 10px; font-size: 23px; flex: none; }
.crumb-folder { width: 23px; height: 19px; }
.file-head { height: 44px; border-top: 1px solid #e0e0e0; border-bottom: 2px solid #d0d0d0; display: flex; font-size: 23px; flex: none; }
.col-name { width: 200px; border-right: 1px solid #e0e0e0; display: flex; align-items: center; padding-left: 23px; position: relative; margin: 2px 0 2px; }
.head-name { font-weight: 700; }
.caret { width: 0; height: 0; border-left: 7.500px solid transparent; border-right: 7.500px solid transparent; border-bottom: 8px solid #616161; margin-left: auto; margin-right: 30px; }
.col-mod { flex: 1; text-align: right; padding-right: 22px; line-height: 42px; }
.file-row { height: 44px; display: flex; align-items: center; padding: 0 22px 0 28px; font-size: 23px; margin-top: -1px; }
.row-folder { width: 24px; height: 18px; margin-right: 12px; }
.row-mod { margin-left: auto; }

/* terminal */
.main { flex: 1; min-width: 0; background: #bdbdbd; padding: 11px 9px 10px 12px; display: flex; flex-direction: column; }
.doc-tabs { height: 45px; display: flex; flex: none; align-items: flex-start; }
.doc-tab { width: 376px; height: 45px; background: #fff; border-top: 4px solid #1976d2; display: flex; align-items: center; padding: 0 0 6px 16px; font-size: 23.800px; }
.term-badge { width: 20px; height: 21px; background: #424242; color: #eee; font-family: "Liberation Mono", monospace; font-size: 12px; line-height: 23px; text-align: center; flex: none; }
.doc-title { margin-left: 11px; white-space: nowrap; width: 292px; }
.doc-close { width: 16px; height: 15px; }
.doc-add { width: 44px; height: 44px; margin: 1px 0 0 1px; background: #eee; border: 1px solid #bdbdbd; display: flex; align-items: center; justify-content: center; }
.doc-add svg { width: 16px; height: 16px; }
.panel { flex: 1; min-height: 0; background: #fff; display: flex; flex-direction: column; }
.panel-strip { height: 13px; border-bottom: 2px solid #c8c8c8; flex: none; }
.terminal { flex: 1; min-height: 0; display: flex; }
.term-text {
  flex: 1;
  margin: 0;
  padding: 20px 0 0 15px;
  font-family: "Liberation Mono", "Noto Sans CJK SC", monospace;
  font-size: 18.340px;
  line-height: 27px;
  color: #111;
  white-space: pre;
  overflow: hidden;
}
.t-warn { color: #cda21f; }
.t-ok { color: #54a012; }
.t-cjk { font-family: "Noto Sans CJK SC", sans-serif; font-size: 22px; line-height: 20px; font-weight: 300; }
.t-prompt { color: #8ae234; }
.t-path { color: #729fcf; }
.scrollbar { width: 26px; background: #fafafa; display: flex; flex-direction: column; justify-content: space-between; align-items: center; padding: 14px 5px 21px 5px; flex: none; }
.arrow-up { width: 0; height: 0; border-left: 8px solid transparent; border-right: 8px solid transparent; border-bottom: 12px solid #8c8c8c; }
.scroll-end { display: flex; flex-direction: column; align-items: center; gap: 14px; }
.thumb { width: 16px; height: 71px; border-radius: 8px; background: #8c8c8c; }
.arrow-down { width: 0; height: 0; border-left: 8px solid transparent; border-right: 8px solid transparent; border-top: 12px solid #8c8c8c; }

.rail-right { width: 56px; flex: none; background: #eee; display: flex; flex-direction: column; align-items: center; fill: #616161; padding: 31px 0 0 2px; }
.gears { width: 29px; height: 29px; }
.bug { width: 24px; height: 26px; margin-top: 65px; }

/* status bar */
.status { height: 42px; flex: none; background: #eee; display: flex; align-items: center; font-size: 23px; border-bottom: 1px solid #d8d8d8; padding: 0 31px 0 50px; }
.toggle { width: 61px; height: 28px; border-radius: 14px; background: #bdbdbd; margin-left: 8px; display: flex; align-items: center; padding-left: 6px; flex: none; }
.knob { width: 17px; height: 17px; border-radius: 50%; background: #fff; }
.st-four { margin-left: 46px; }
.st-badge { width: 27px; height: 27px; font-size: 16px; line-height: 30px; margin-left: 20px; }
.st-zero { margin-left: 16px; }
.chip { width: 24px; height: 24px; margin-left: 20px; }
.st-spacer { flex: 1; }
.st-path { font-size: 23.600px; }
.st-one { margin-left: 31px; }
.bell { width: 28px; height: 28px; margin-left: 22px; }
```
